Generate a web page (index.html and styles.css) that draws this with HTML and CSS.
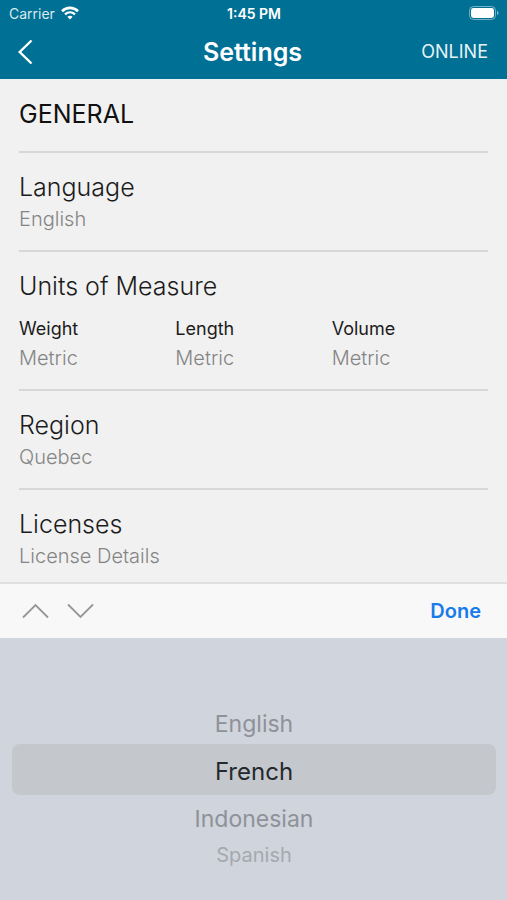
FILE: index.html
```html
<!DOCTYPE html>
<html lang="en">
<head>
<meta charset="utf-8">
<meta name="viewport" content="width=device-width, initial-scale=1">
<title>Settings</title>
<link rel="stylesheet" href="styles.css">
</head>
<body>
<div class="screen">
  <header class="top">
    <div class="status">
      <div class="carrier">
        <span>Carrier</span>
        <svg width="18" height="14" viewBox="0 0 18 14" fill="none" stroke="#fff" aria-hidden="true">
          <path d="M1 5.2C5.6.8 12.4.8 17 5.2" stroke-width="2.6"/>
          <path d="M4 8.4c2.9-2.7 7.1-2.7 10 0" stroke-width="2.3"/>
          <path d="M6.4 10.8c1.5-1.4 3.7-1.4 5.2 0L9 13.5z" fill="#fff" stroke="none"/>
        </svg>
      </div>
      <time class="clock">1:45 PM</time>
      <svg class="battery" width="30" height="14" viewBox="0 0 30 14" aria-hidden="true">
        <rect x=".5" y=".5" width="26" height="13" rx="4" fill="none" stroke="#fff" stroke-opacity=".45"/>
        <rect x="2" y="2" width="23" height="10" rx="2.4" fill="#fff"/>
        <path d="M28 4.8c2 .7 2 3.700 0 4.400z" fill="#fff" fill-opacity=".5"/>
      </svg>
    </div>
    <div class="navbar">
      <button class="back" type="button" aria-label="Back">
        <svg width="16" height="26" viewBox="0 0 16 26" fill="none" stroke="#fff" stroke-width="2.4" aria-hidden="true"><path d="M14.500 1.500 2.700 13 14.500 24.500"/></svg>
      </button>
      <h1 class="title">Settings</h1>
      <span class="online">ONLINE</span>
    </div>
  </header>

  <main class="settings">
    <h2 class="group">GENERAL</h2>
    <section class="row">
      <h3 class="label">Language</h3>
      <p class="value">English</p>
    </section>
    <section class="row">
      <h3 class="label">Units of Measure</h3>
      <dl class="units">
        <div><dt>Weight</dt><dd class="value">Metric</dd></div>
        <div><dt>Length</dt><dd class="value">Metric</dd></div>
        <div><dt>Volume</dt><dd class="value">Metric</dd></div>
      </dl>
    </section>
    <section class="row">
      <h3 class="label">Region</h3>
      <p class="value">Quebec</p>
    </section>
    <section class="row">
      <h3 class="label">Licenses</h3>
      <p class="value">License Details</p>
    </section>
  </main>

  <div class="toolbar">
    <div class="steps">
      <button type="button" aria-label="Previous field">
        <svg width="27" height="16" viewBox="0 0 27 16" fill="none" stroke="#969696" stroke-width="1.800" aria-hidden="true"><path d="M1 14.500 13.500 2 26 14.500"/></svg>
      </button>
      <button type="button" aria-label="Next field">
        <svg width="27" height="16" viewBox="0 0 27 16" fill="none" stroke="#969696" stroke-width="1.800" aria-hidden="true"><path d="M1 1.500 13.500 14 26 1.500"/></svg>
      </button>
    </div>
    <button class="done" type="button">Done</button>
  </div>

  <div class="picker" role="radiogroup" aria-label="Language">
    <label class="option"><input type="radio" name="language">English</label>
    <label class="option selected"><input type="radio" name="language" checked>French</label>
    <label class="option"><input type="radio" name="language">Indonesian</label>
    <label class="option far"><input type="radio" name="language">Spanish</label>
  </div>
</div>
</body>
</html>
```
FILE: styles.css
```css
* {
  box-sizing: border-box;
}

body,
h1,
h2,
h3,
p,
dl,
dd {
  margin: 0;
}

body {
  font-family: Inter, "Liberation Sans", sans-serif;
  background: #f1f1f1;
  color: #1c1c1c;
}

button {
  padding: 0;
  border: 0;
  background: none;
  font: inherit;
  cursor: pointer;
}

svg {
  display: block;
}

.screen {
  display: flex;
  flex-direction: column;
  min-height: 100vh;
}

.top {
  background: #007095;
  color: #fff;
}

.status,
.navbar {
  display: grid;
  grid-template-columns: 1fr auto 1fr;
  align-items: center;
}

.status {
  height: 26px;
  padding: 0 8px 0 9px;
}

.carrier {
  display: flex;
  align-items: center;
  gap: 6px;
  font-size: 14px;
  color: #d9eaf0;
}

.clock {
  font-size: 14px;
  font-weight: 600;
}

.battery,
.online {
  justify-self: end;
}

.navbar {
  height: 53px;
  padding: 0 19px 2px 17px;
}

.back {
  justify-self: start;
}

.title {
  font-size: 25px;
  font-weight: 600;
  line-height: 32px;
}

.online {
  font-size: 18px;
  color: #e6f2f6;
}

.settings {
  flex: none;
  padding: 0 19px;
}

.group {
  padding: 19px 0 21px;
  font-size: 25px;
  font-weight: 400;
  line-height: 32px;
  color: #111;
}

.row {
  padding: 18px 0 17px;
  border-top: 2px solid #d7d7d7;
}

.row:last-child {
  padding-bottom: 12px;
}

.label {
  font-size: 25px;
  font-weight: 300;
  line-height: 32px;
}

.value {
  font-size: 20px;
  font-weight: 300;
  line-height: 28px;
  color: #858585;
}

.label + .value {
  margin-top: 2px;
}

.units {
  display: grid;
  grid-template-columns: repeat(3, 1fr);
  padding-top: 12px;
}

.units dt {
  font-size: 18px;
  line-height: 30px;
}

.toolbar {
  display: flex;
  align-items: center;
  justify-content: space-between;
  height: 56px;
  padding: 0 26px 0 22px;
  border-top: 2px solid #e0e0e0;
  background: #f8f8f8;
}

.steps {
  display: flex;
  gap: 18px;
}

.done {
  font-size: 20px;
  font-weight: 600;
  color: #187bea;
}

.picker {
  flex: 1;
  padding: 66px 11px 24px 12px;
  background: #d0d4dc;
}

.option {
  display: flex;
  align-items: center;
  justify-content: center;
  height: 40px;
  font-size: 23px;
  color: #8e9298;
  cursor: pointer;
}

.option input {
  appearance: none;
  width: 0;
  height: 0;
  margin: 0;
}

.selected {
  height: 51px;
  padding-top: 4px;
  border-radius: 8px;
  background: #c4c8cd;
  font-size: 24px;
  color: #25292d;
}

.selected + .option {
  height: 48px;
}

.far {
  height: 24px;
  font-size: 20px;
  color: #a5a9af;
}
```
